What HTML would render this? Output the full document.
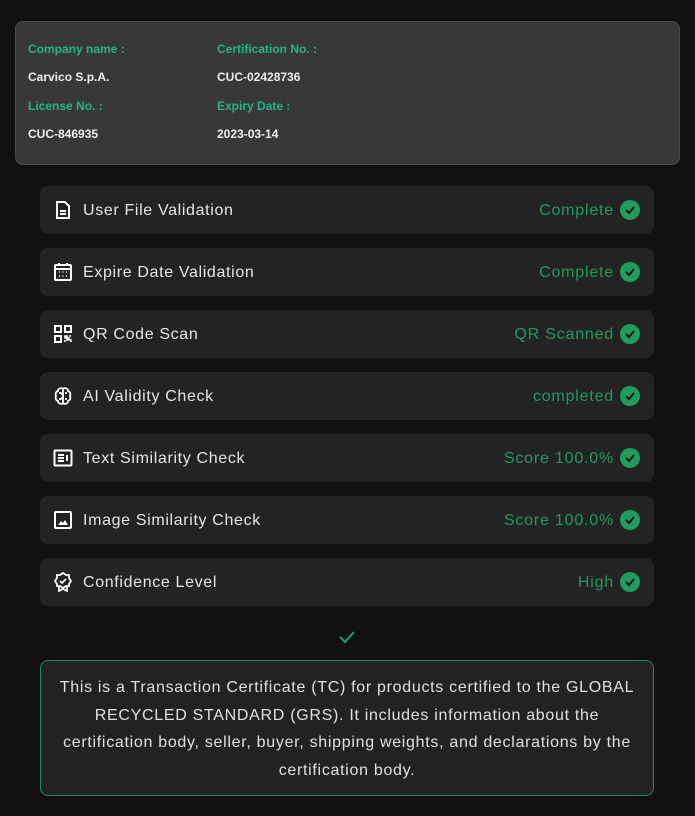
<!DOCTYPE html><html><head><style>
body{margin:0;background:#111111;width:695px;height:816px;overflow:hidden;font-family:"Liberation Sans",sans-serif;position:relative}
.card{position:absolute;left:15px;top:21px;width:665px;height:144px;background:#393838;border:1px solid #4a4a4a;border-radius:8px;box-sizing:border-box}
.l{position:absolute;font-size:12px;font-weight:bold;color:#22b58a}
.v{position:absolute;font-size:12px;font-weight:bold;color:#eee}
.row{position:absolute;left:40px;width:614px;height:48px;background:#232323;border-radius:8px}
.row svg.ic{position:absolute;left:13px;top:14px}
.row .t{position:absolute;left:43px;top:16px;font-size:16px;color:#e6e6e6;letter-spacing:.65px}
.row .s{position:absolute;right:40px;top:16px;font-size:16px;color:#1f9d5c;letter-spacing:.8px}
.row .c{position:absolute;right:14px;top:14px;width:20px;height:20px;border-radius:50%;background:#1f9d5c}
.box{position:absolute;left:40px;top:660px;width:614px;height:136px;box-sizing:border-box;border:1px solid #208a5e;border-radius:8px;background:#222;color:#e0e0e0;font-size:16px;line-height:27.7px;text-align:center;padding:13px 12px;letter-spacing:.7px}
</style></head><body>
<div class="card">
<div class="l" style="left:12px;top:20px">Company name :</div>
<div class="l" style="left:201px;top:20px">Certification No. :</div>
<div class="v" style="left:12px;top:48px">Carvico S.p.A.</div>
<div class="v" style="left:201px;top:48px">CUC-02428736</div>
<div class="l" style="left:12px;top:77px">License No. :</div>
<div class="l" style="left:201px;top:77px">Expiry Date :</div>
<div class="v" style="left:12px;top:105px">CUC-846935</div>
<div class="v" style="left:201px;top:105px">2023-03-14</div>
</div>

<div class="row" style="top:186px"><svg class="ic" width="20" height="20" viewBox="0 0 20 20" fill="none" stroke="#fff" stroke-width="2"><path d="M4 2h8l4 4v12H4z"/><path d="M7 11h6M7 14h6"/></svg><div class="t">User File Validation</div><div class="s">Complete</div><svg class="c" viewBox="0 0 20 20"><path d="M6 10l3 3 5-6" stroke="#111" stroke-width="2" fill="none"/></svg></div>

<div class="row" style="top:248px"><svg class="ic" width="20" height="20" viewBox="0 0 20 20" fill="none" stroke="#fff" stroke-width="2"><rect x="2" y="3" width="16" height="15" rx="1"/><path d="M6 1v3M14 1v3M2 7h16"/><path d="M6 10h1M9.5 10h1M13 10h1M6 14h1M9.5 14h1M13 14h1" stroke-width="1.6"/></svg><div class="t">Expire Date Validation</div><div class="s">Complete</div><svg class="c" viewBox="0 0 20 20"><path d="M6 10l3 3 5-6" stroke="#111" stroke-width="2" fill="none"/></svg></div>

<div class="row" style="top:310px"><svg class="ic" width="20" height="20" viewBox="0 0 20 20" fill="none" stroke="#fff" stroke-width="2"><rect x="2" y="2" width="6" height="6"/><rect x="12" y="2" width="6" height="6"/><rect x="2" y="12" width="6" height="6"/><path d="M12 12h2v2h-2zM16 12h2M14 14h2v2h-2zM12 16v2M16 16h2v2" stroke-width="1.6"/></svg><div class="t">QR Code Scan</div><div class="s">QR Scanned</div><svg class="c" viewBox="0 0 20 20"><path d="M6 10l3 3 5-6" stroke="#111" stroke-width="2" fill="none"/></svg></div>

<div class="row" style="top:372px"><svg class="ic" width="20" height="20" viewBox="0 0 20 20" fill="none" stroke="#fff" stroke-width="1.8"><path d="M10 3c-1-1.5-5-1-5 2-2 .5-3 3-2 5-1 2 0 4.5 2 5 0 3 4 3.5 5 2 1 1.5 5 1 5-2 2-.5 3-3 2-5 1-2 0-4.5-2-5 0-3-4-3.5-5-2z"/><path d="M10 3v14M6 7h2l2 2M6 13h2l2-2M14 7h-2M14 13h-2"/></svg><div class="t">AI Validity Check</div><div class="s">completed</div><svg class="c" viewBox="0 0 20 20"><path d="M6 10l3 3 5-6" stroke="#111" stroke-width="2" fill="none"/></svg></div>

<div class="row" style="top:434px"><svg class="ic" width="20" height="20" viewBox="0 0 20 20" fill="none" stroke="#fff" stroke-width="2"><rect x="1.5" y="2.5" width="17" height="15" rx="1"/><path d="M5 7h6M5 10h6M5 13h6M14 7v6"/></svg><div class="t">Text Similarity Check</div><div class="s">Score 100.0%</div><svg class="c" viewBox="0 0 20 20"><path d="M6 10l3 3 5-6" stroke="#111" stroke-width="2" fill="none"/></svg></div>

<div class="row" style="top:496px"><svg class="ic" width="20" height="20" viewBox="0 0 20 20" fill="none" stroke="#fff" stroke-width="2"><rect x="2" y="2" width="16" height="16" rx="1"/><path d="M5 15l3-4 2 2 2-3 3 5z" fill="#fff" stroke="none"/></svg><div class="t">Image Similarity Check</div><div class="s">Score 100.0%</div><svg class="c" viewBox="0 0 20 20"><path d="M6 10l3 3 5-6" stroke="#111" stroke-width="2" fill="none"/></svg></div>

<div class="row" style="top:558px"><svg class="ic" width="20" height="20" viewBox="0 0 20 20" fill="none" stroke="#fff" stroke-width="1.8"><path d="M10 1l3 2h3v3l2 3-2 3v2h-3l-3 2-3-2H4v-2L2 9l2-3V3h3z"/><path d="M7 9l2 2 4-4"/><path d="M6 14v5l4-2 4 2v-5"/></svg><div class="t">Confidence Level</div><div class="s">High</div><svg class="c" viewBox="0 0 20 20"><path d="M6 10l3 3 5-6" stroke="#111" stroke-width="2" fill="none"/></svg></div>

<svg style="position:absolute;left:338px;top:629px" width="18" height="16" viewBox="0 0 18 16"><path d="M2 8l5 5 9-10" stroke="#1f9d6c" stroke-width="2" fill="none"/></svg>

<div class="box">This is a Transaction Certificate (TC) for products certified to the GLOBAL RECYCLED STANDARD (GRS). It includes information about the certification body, seller, buyer, shipping weights, and declarations by the certification body.</div>
</body></html>
